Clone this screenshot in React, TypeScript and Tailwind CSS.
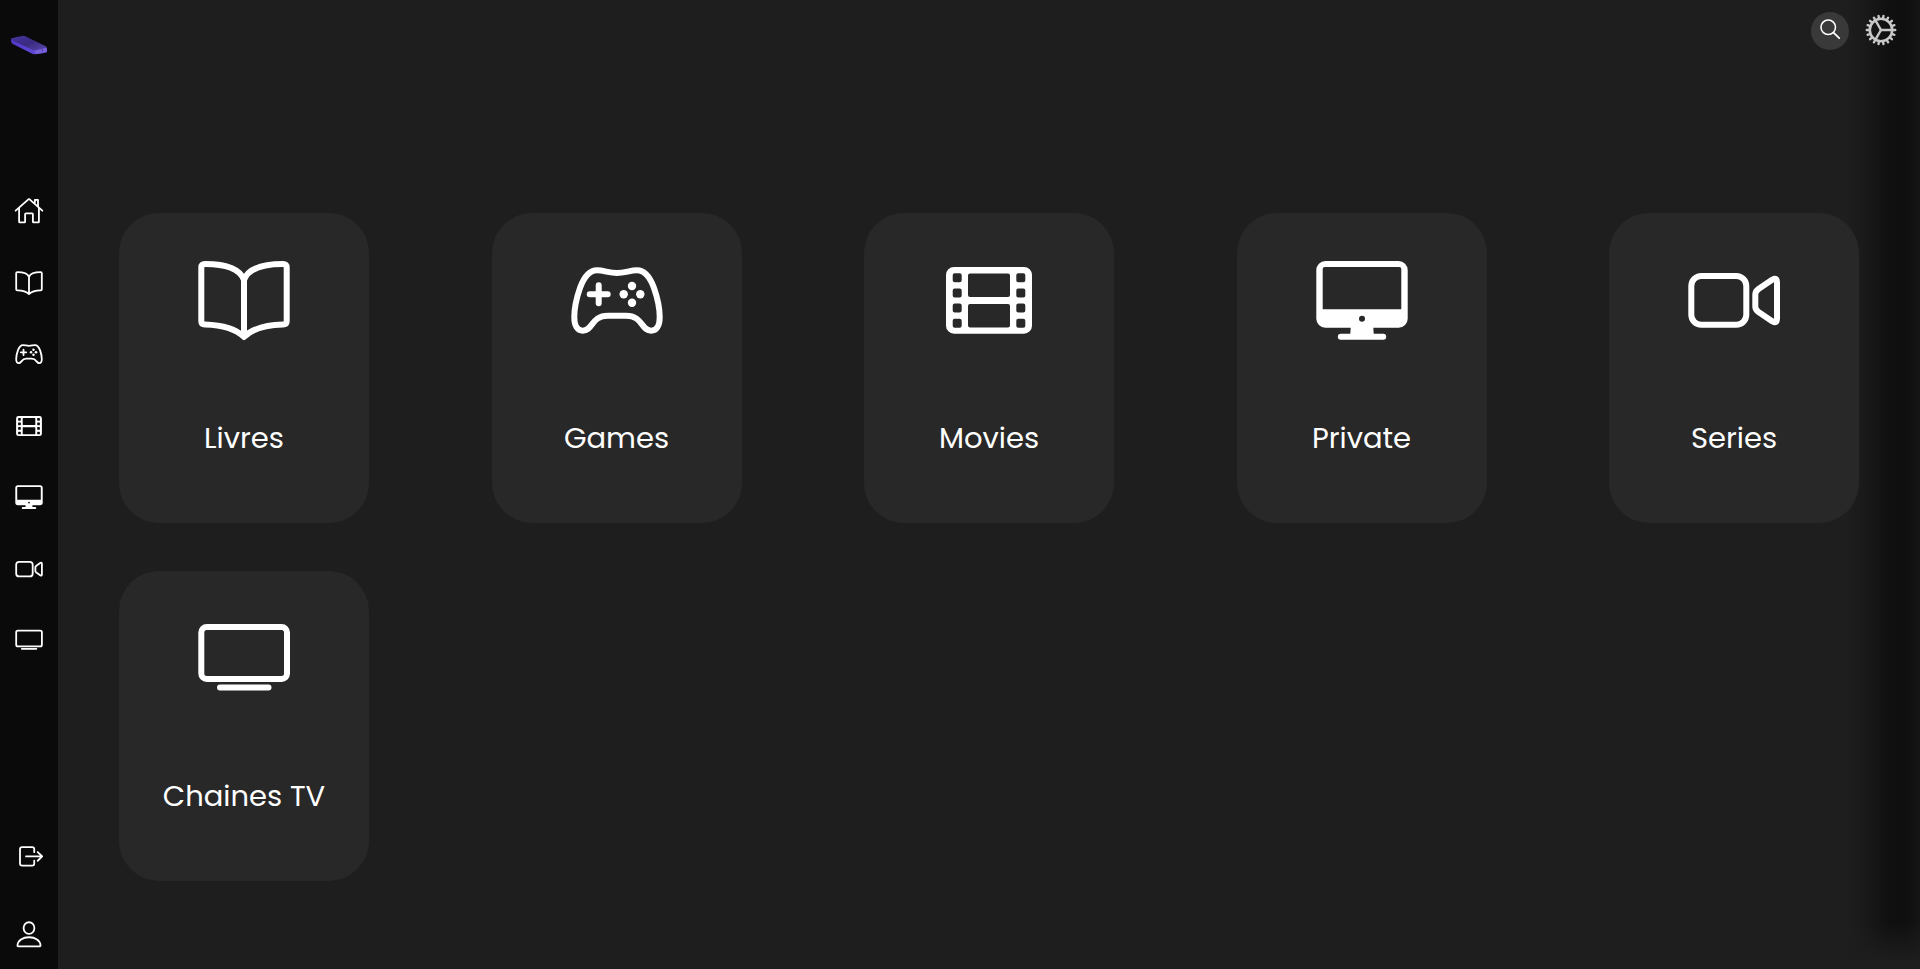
import type { ReactNode } from "react";

type IconProps = { className?: string };

function Icon({ className, children }: { className?: string; children: ReactNode }) {
  return (
    <svg
      viewBox="0 0 100 100"
      className={className}
      fill="none"
      stroke="currentColor"
      strokeWidth={6}
      strokeLinecap="round"
      strokeLinejoin="round"
      aria-hidden="true"
    >
      {children}
    </svg>
  );
}

const HomeIcon = ({ className }: IconProps) => (
  <Icon className={className}>
    <path d="M5.5 49 L48 11 Q50 9.500 52 11 L94.500 49" />
    <path d="M17 42 V86 Q17 88 19 88 H35 Q37 88 37 86 V61 Q37 58 40 58 H60 Q63 58 63 61 V86 Q63 88 65 88 H81 Q83 88 83 86 V42" />
    <path d="M69.500 22 V13 H80 V34" strokeWidth={6} />
  </Icon>
);

const BookIcon = ({ className }: IconProps) => (
  <Icon className={className}>
    <path d="M50 30 C46 19 31 14 11 14 Q7.300 14 7.300 17.500 V71 Q7.300 74.500 11 74.500 C29 75 42 79 50 87 C58 79 71 75 89 74.500 Q92.700 74.500 92.700 71 V17.500 Q92.700 14 89 14 C69 14 54 19 50 30 V86" />
  </Icon>
);

const GameIcon = ({ className }: IconProps) => (
  <Icon className={className}>
    <path d="M50 23 C42 23 37 20.300 30 20.300 C22 20.300 17 27 13 38 C9.500 48 7.300 60 7.300 67 C7.300 76 10.500 80.700 15.800 80.700 C26 80.700 24 65.700 41 65.700 H59 C76 65.700 74 80.700 84.200 80.700 C89.500 80.700 92.700 76 92.700 67 C92.700 60 90.500 48 87 38 C83 27 78 20.300 70 20.300 C63 20.300 58 23 50 23 Z" />
    <path d="M22.700 44.300 H40.700 M31.700 35.300 V53.300" />
    <g fill="currentColor" stroke="none">
      <circle cx="65" cy="36" r="4.2" />
      <circle cx="56.700" cy="44.300" r="4.2" />
      <circle cx="73.300" cy="44.300" r="4.2" />
      <circle cx="65" cy="52.700" r="4.2" />
    </g>
  </Icon>
);

const hole = (x: number, y: number) =>
  `M${x + 2} ${y}h5a2 2 0 0 1 2 2v5a2 2 0 0 1-2 2h-5a2 2 0 0 1-2-2v-5a2 2 0 0 1 2-2z`;

const FilmIcon = ({ className }: IconProps) => (
  <Icon className={className}>
    <path
      stroke="none"
      fill="currentColor"
      fillRule="evenodd"
      d={
        "M15 17H85a8 8 0 0 1 8 8V75.700a8 8 0 0 1-8 8H15a8 8 0 0 1-8-8V25a8 8 0 0 1 8-8z" +
        "M31 23.500H69a2 2 0 0 1 2 2V45a2 2 0 0 1-2 2H31a2 2 0 0 1-2-2V25.500a2 2 0 0 1 2-2z" +
        "M31 54H69a2 2 0 0 1 2 2V75.500a2 2 0 0 1-2 2H31a2 2 0 0 1-2-2V56a2 2 0 0 1 2-2z" +
        [23.2, 38.4, 53.6, 68.8].map((y) => hole(13.7, y) + hole(77.3, y)).join("")
      }
    />
  </Icon>
);

const DesktopIcon = ({ className }: IconProps) => (
  <Icon className={className}>
    <path
      stroke="none"
      fill="currentColor"
      fillRule="evenodd"
      d="M13.300 11H86.700a9 9 0 0 1 9 9V68.700a9 9 0 0 1-9 9H61.300L61.700 83.700H71.200a3 3 0 0 1 0 6H28.800a3 3 0 0 1 0-6H38.300L38.700 77.700H13.300a9 9 0 0 1-9-9V20a9 9 0 0 1 9-9zM12.700 17a2 2 0 0 0-2 2V59.300H89.300V19a2 2 0 0 0-2-2zM50 65.700a3 3 0 1 0 0 6 3 3 0 0 0 0-6z"
    />
  </Icon>
);

const VideoIcon = ({ className }: IconProps) => (
  <Icon className={className}>
    <rect x="7.300" y="26" width="55" height="48.700" rx="10" />
    <path d="M93 32.500 Q93 27 88.500 29.500 L74.500 39 Q71.300 41.300 71.300 44.500 V56.500 Q71.300 59.700 74.500 62 L88.500 71.500 Q93 74 93 68.500 Z" />
  </Icon>
);

const TvIcon = ({ className }: IconProps) => (
  <Icon className={className}>
    <rect x="7.300" y="19" width="85.700" height="52" rx="5.500" />
    <path d="M26 79.500 H74.500" />
  </Icon>
);

const LogoutIcon = ({ className }: IconProps) => (
  <Icon className={className}>
    <path d="M67.500 34 V24 Q67.500 17 60.500 17 H27 Q20 17 20 24 V71.500 Q20 78.500 27 78.500 H60.500 Q67.500 78.500 67.500 71.500 V62" />
    <path d="M40 48 H93 M79 33.500 L94 48 L79 62.500" />
  </Icon>
);

const UserIcon = ({ className }: IconProps) => (
  <Icon className={className}>
    <ellipse cx="50" cy="27" rx="18" ry="19.500" />
    <path d="M14 88 Q11.500 88 11.500 85 C12.500 68 29 57.500 50 57.500 C71 57.500 87.500 68 88.500 85 Q88.500 88 86 88 Z" />
  </Icon>
);

const SearchIcon = ({ className }: IconProps) => (
  <Icon className={className}>
    <circle cx="42" cy="42" r="33" strokeWidth={7} />
    <path d="M66 66 L92 92" strokeWidth={8} />
  </Icon>
);

const GearIcon = ({ className }: IconProps) => (
  <Icon className={className}>
    <circle cx="50" cy="50" r="35" strokeWidth={8} />
    {Array.from({ length: 18 }, (_, i) => (
      <path key={i} d="M86 50 H94.500" strokeWidth={7.5} transform={`rotate(${i * 20} 50 50)`} />
    ))}
    {[0, 120, 240].map((angle) => (
      <path key={angle} d="M50 50 H84" strokeWidth={7.5} transform={`rotate(${angle} 50 50)`} />
    ))}
  </Icon>
);

const Logo = ({ className }: IconProps) => (
  <svg viewBox="30 101 114 66" className={className} aria-hidden="true">
    <defs>
      <linearGradient id="logo-top" x1="0" y1="0" x2="1" y2="1">
        <stop offset="0" stopColor="#4a36a6" />
        <stop offset="0.5" stopColor="#3a2a80" />
        <stop offset="1" stopColor="#5a46aa" />
      </linearGradient>
      <linearGradient id="logo-side" x1="0" y1="0" x2="1" y2="0">
        <stop offset="0" stopColor="#5136c4" />
        <stop offset="1" stopColor="#6a51e6" />
      </linearGradient>
    </defs>
    <path d="M33 117 L102 149 L139 141 Q142 143 141 155 Q139 158 105 162 Q101 162 97 160 L37 130 Q32 126 33 117Z" fill="url(#logo-side)" />
    <path d="M34 114 Q50 109 70 106 Q74 106 79 109 L136 137 Q141 140 139 142 L107 150 Q103 151 98 149 L36 119 Q32 116 34 114Z" fill="url(#logo-top)" />
    <path d="M104 151 L139 143 Q142 145 140 155 L107 161Z" fill="#7860d6" />
    <path d="M125 148 L129 147 L127 154Z" fill="#3c2b86" />
  </svg>
);

const categories = [
  { label: "Livres", Glyph: BookIcon },
  { label: "Games", Glyph: GameIcon },
  { label: "Movies", Glyph: FilmIcon },
  { label: "Private", Glyph: DesktopIcon },
  { label: "Series", Glyph: VideoIcon },
  { label: "Chaines TV", Glyph: TvIcon },
];

const navigation = [{ label: "Home", Glyph: HomeIcon }, ...categories];

function Sidebar() {
  return (
    <aside className="flex w-[58px] shrink-0 flex-col items-center bg-[#0a0a0a] pt-[34px] pb-[19px]">
      <a href="#home" aria-label="Logo">
        <Logo className="block h-[22px] w-[38px]" />
      </a>
      <nav className="mt-[140px] flex h-[459px] flex-col justify-between">
        {navigation.map(({ label, Glyph }) => (
          <a key={label} href={`#${label.toLowerCase().replace(" ", "-")}`} aria-label={label}>
            <Glyph className="block size-[30px]" />
          </a>
        ))}
      </nav>
      <div className="mt-auto flex flex-col gap-12">
        <button type="button" aria-label="Logout">
          <LogoutIcon className="block size-[30px]" />
        </button>
        <button type="button" aria-label="Profile">
          <UserIcon className="block size-[30px]" />
        </button>
      </div>
    </aside>
  );
}

export default function App() {
  return (
    <div className="relative flex min-h-screen bg-[#1e1e1e] font-['Poppins','Inter',sans-serif] text-white">
      <Sidebar />
      <div
        aria-hidden="true"
        className="pointer-events-none absolute inset-y-0 right-0 w-[72px] bg-[linear-gradient(to_right,transparent,#1a1a1a_22%,#101010_56%,#0f0f0f_80%,#151515)] mask-[linear-gradient(to_top,transparent_8px,black_48px)]"
      />
      <div className="relative flex min-w-0 grow flex-col">
        <header className="flex items-center justify-end gap-4 pt-3 pr-[23px]">
          <button
            type="button"
            aria-label="Search"
            className="flex size-[38px] items-center justify-center rounded-full bg-[#393939]"
          >
            <SearchIcon className="mb-1 size-[22px]" />
          </button>
          <button type="button" aria-label="Settings" className="mb-[2px] text-[#c8c8c8]">
            <GearIcon className="block size-8" />
          </button>
        </header>
        <main className="grid grid-cols-[repeat(auto-fill,250px)] justify-between gap-x-[100px] gap-y-12 px-[61px] pt-[163px] pb-20">
          {categories.map(({ label, Glyph }) => (
            <a
              key={label}
              href={`#${label.toLowerCase().replace(" ", "-")}`}
              className="flex h-[310px] flex-col items-center gap-[68px] rounded-[40px] bg-[#282828] pt-[37px]"
            >
              <Glyph className="size-[100px]" />
              <span className="text-[29px] leading-10">{label}</span>
            </a>
          ))}
        </main>
      </div>
    </div>
  );
}
